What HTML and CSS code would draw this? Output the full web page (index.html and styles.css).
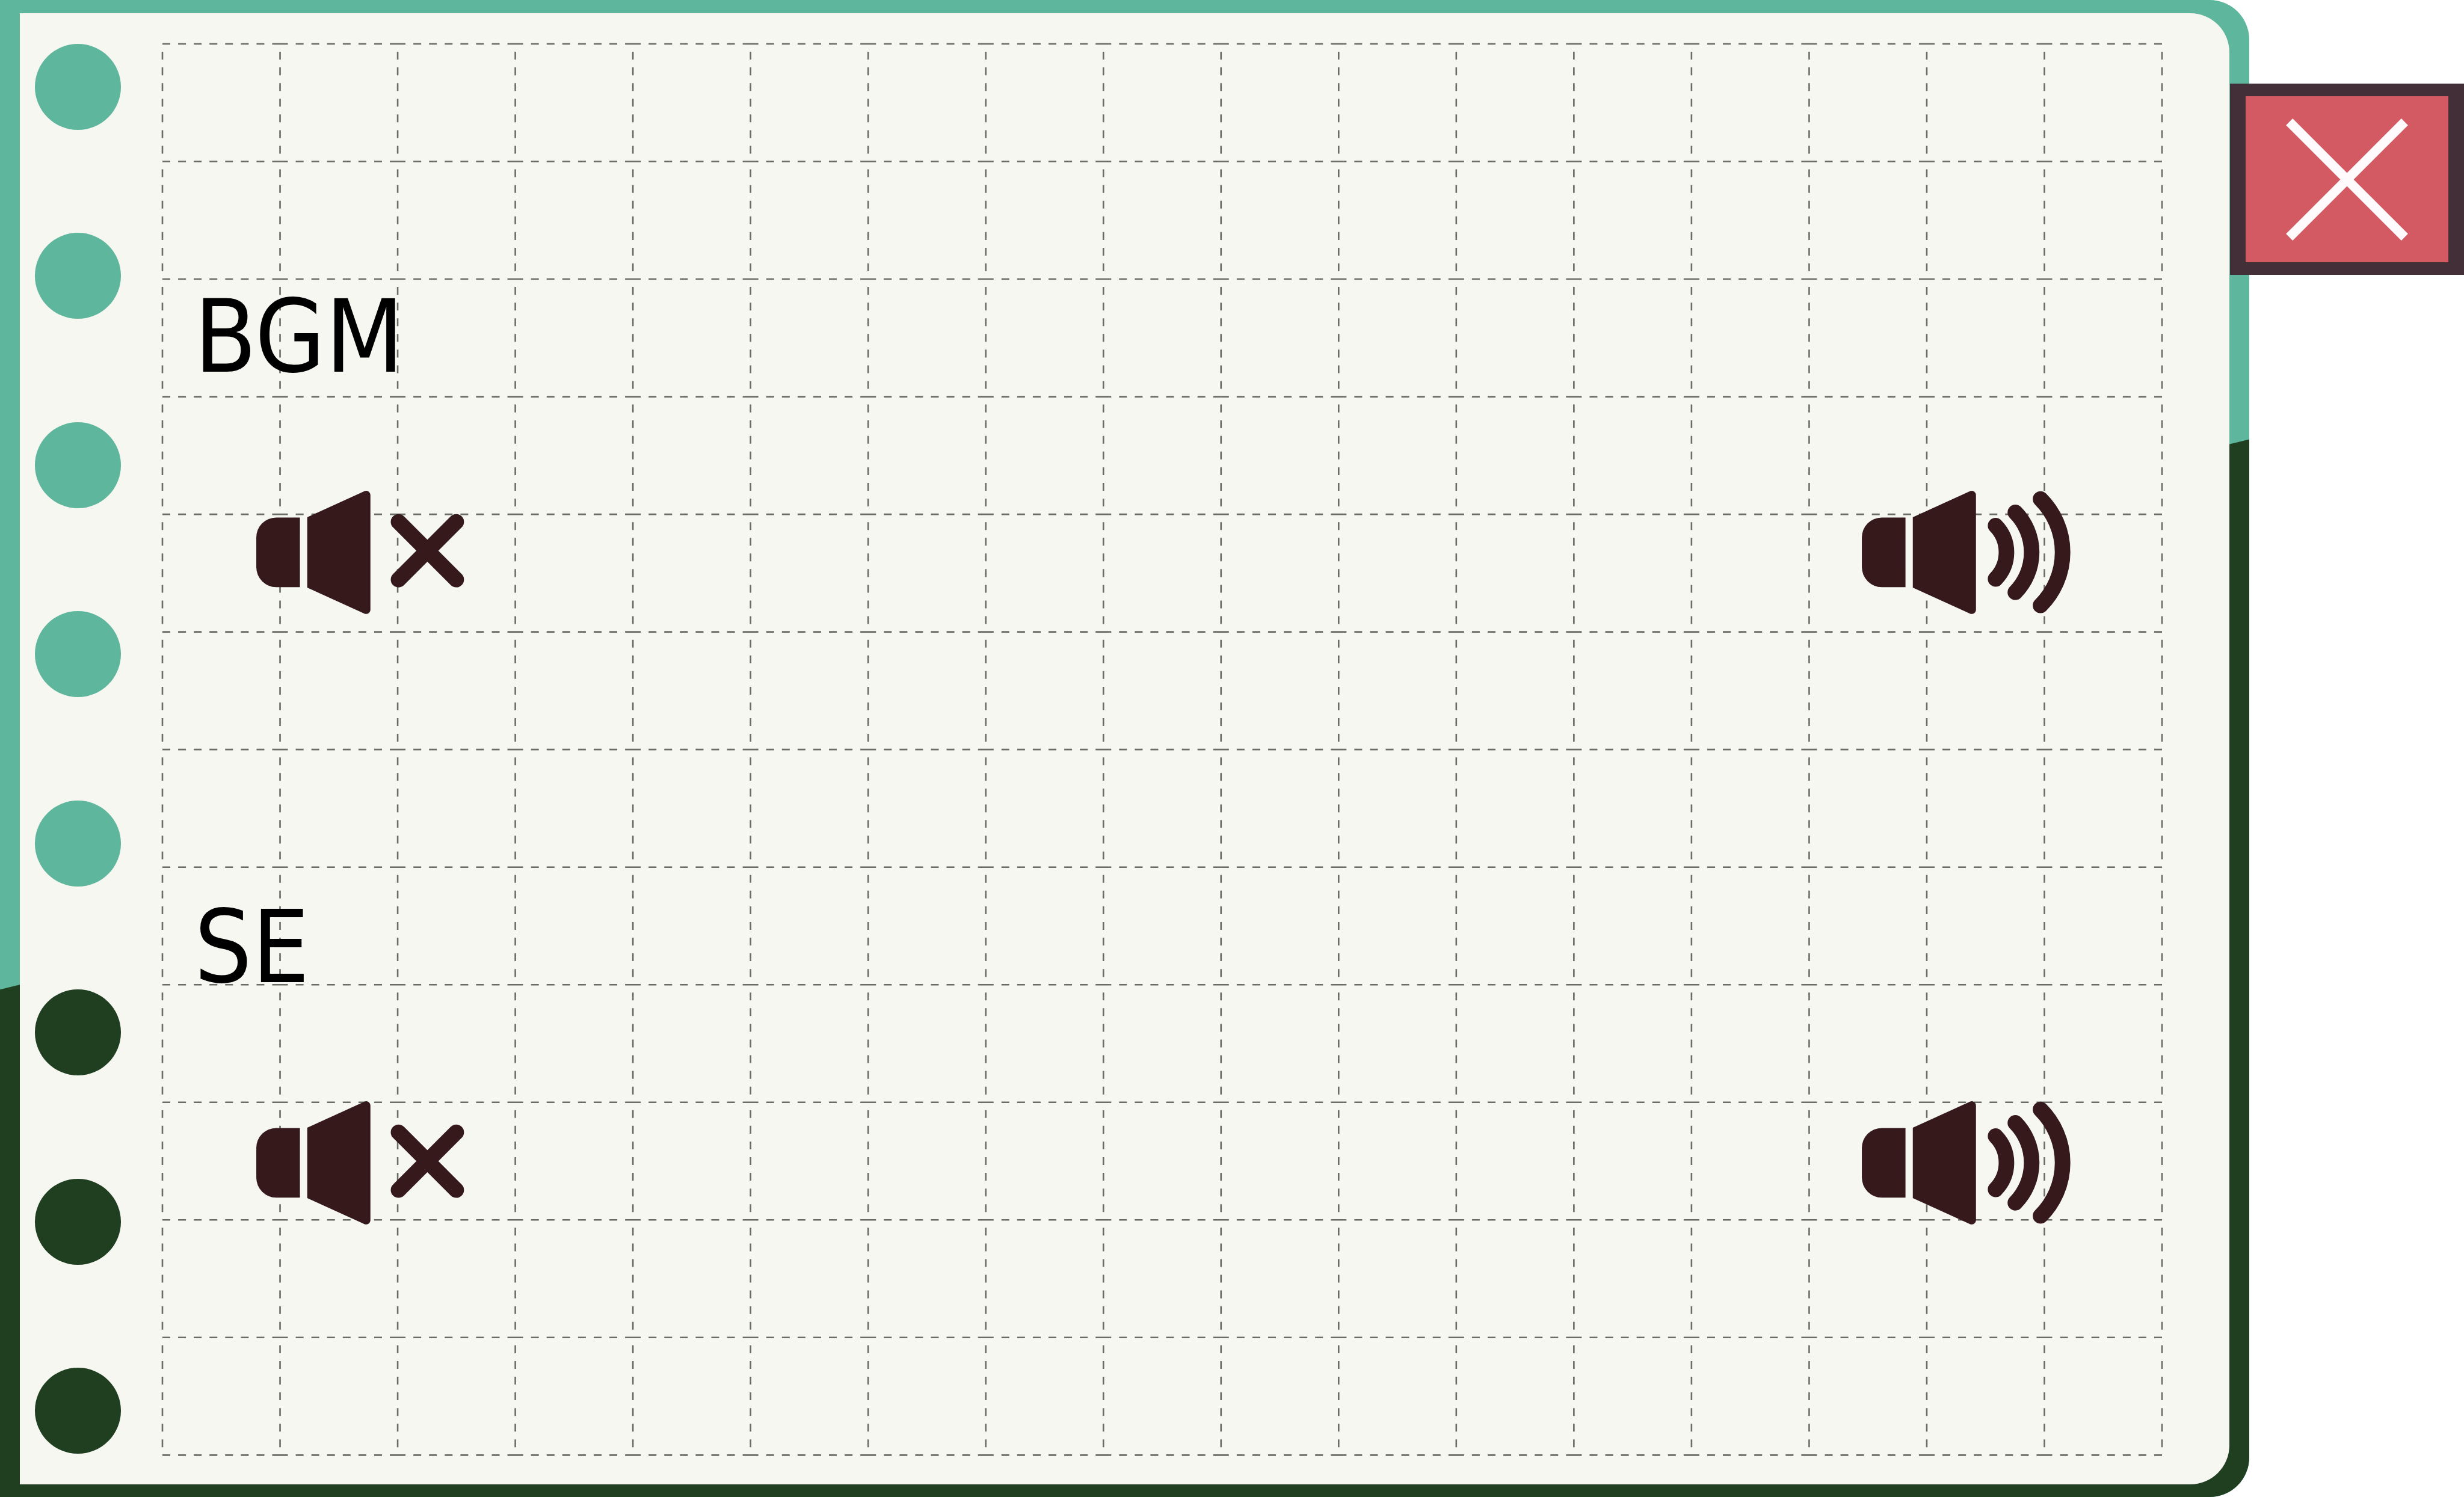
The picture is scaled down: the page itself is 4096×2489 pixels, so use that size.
FILE: index.html
```html
<!DOCTYPE html>
<html lang="en">
<head>
<meta charset="utf-8">
<meta name="viewport" content="width=device-width, initial-scale=1">
<title>Sound settings</title>
<link rel="stylesheet" href="styles.css">
</head>
<body>
<svg class="symbols" aria-hidden="true">
  <symbol id="speaker" viewBox="0 0 555 328">
    <path d="M116 71H53A53 53 0 0 0 0 124V203.300A53 53 0 0 0 53 256.300H116Z"/>
    <path d="M135.500 70.300L287.300 1.100A11.500 11.500 0 0 1 303.500 11.500V316.300A11.500 11.500 0 0 1 287.300 326.700L135.500 257.500Z"/>
  </symbol>
</svg>
<main class="page">
  <section class="cover">
    <div class="sheet">
      <div class="holes" aria-hidden="true">
        <span class="hole"></span>
        <span class="hole"></span>
        <span class="hole"></span>
        <span class="hole"></span>
        <span class="hole"></span>
        <span class="hole hole-dark"></span>
        <span class="hole hole-dark"></span>
        <span class="hole hole-dark"></span>
      </div>
      <div class="board">
        <svg class="grid-lines" viewBox="0 0 255 180" aria-hidden="true">
          <path class="line-across" d="M0 0H255M0 15H255M0 30H255M0 45H255M0 60H255M0 75H255M0 90H255M0 105H255M0 120H255M0 135H255M0 150H255M0 165H255M0 180H255"/>
          <path class="line-down" d="M0 0V180M15 0V180M30 0V180M45 0V180M60 0V180M75 0V180M90 0V180M105 0V180M120 0V180M135 0V180M150 0V180M165 0V180M180 0V180M195 0V180M210 0V180M225 0V180M240 0V180M255 0V180"/>
        </svg>
        <div class="settings">
          <section class="setting">
            <h2 class="setting-name">BGM</h2>
            <div class="setting-controls">
              <button class="sound-button" type="button" aria-label="Mute BGM">
                <svg class="sound-icon" viewBox="0 0 555 328" aria-hidden="true">
                  <use href="#speaker"/>
                  <path class="stroke" d="M378.300 82.700L531.700 236.300M531.700 82.700L378.300 236.300"/>
                </svg>
              </button>
              <button class="sound-button" type="button" aria-label="Turn BGM up">
                <svg class="sound-icon" viewBox="0 0 555 328" aria-hidden="true">
                  <use href="#speaker"/>
                  <path class="stroke" d="M355.600 92.700A101.400 101.400 0 0 1 355.600 234.600M408.200 57.400A151.900 151.900 0 0 1 408.200 270M475.200 22A200 200 0 0 1 475.200 305"/>
                </svg>
              </button>
            </div>
          </section>
          <section class="setting">
            <h2 class="setting-name">SE</h2>
            <div class="setting-controls">
              <button class="sound-button" type="button" aria-label="Mute SE">
                <svg class="sound-icon" viewBox="0 0 555 328" aria-hidden="true">
                  <use href="#speaker"/>
                  <path class="stroke" d="M378.300 82.700L531.700 236.300M531.700 82.700L378.300 236.300"/>
                </svg>
              </button>
              <button class="sound-button" type="button" aria-label="Turn SE up">
                <svg class="sound-icon" viewBox="0 0 555 328" aria-hidden="true">
                  <use href="#speaker"/>
                  <path class="stroke" d="M355.600 92.700A101.400 101.400 0 0 1 355.600 234.600M408.200 57.400A151.900 151.900 0 0 1 408.200 270M475.200 22A200 200 0 0 1 475.200 305"/>
                </svg>
              </button>
            </div>
          </section>
        </div>
      </div>
    </div>
  </section>
  <button class="close-button" type="button" aria-label="Close">
    <svg class="close-icon" viewBox="0 0 325 325" aria-hidden="true">
      <path d="M9 9L316 316M316 9L9 316"/>
    </svg>
  </button>
</main>
</body>
</html>
```
FILE: styles.css
```css
:root {
  --mint: #5eb69d;
  --forest: #203f21;
  --paper: #f6f7f1;
  --grid: #6b6c66;
  --ink: #35191b;
  --plum: #432f38;
  --red: #d35a62;
}

* {
  box-sizing: border-box;
}

body {
  margin: 0;
  background: #fff;
  color: #000;
  font-family: "DejaVu Sans Condensed", "DejaVu Sans", sans-serif;
}

.symbols {
  position: absolute;
  width: 0;
  height: 0;
}

.page {
  display: flex;
  align-items: flex-start;
  min-height: 100vh;
}

/* Notebook cover: mint, with a forest green part below a slanted edge */
.cover {
  position: relative;
  display: flex;
  flex: 1;
  min-width: 0;
  min-height: 100vh;
  padding: 22px 33px 21px;
  overflow: hidden;
  border-radius: 0 66px 66px 0;
  background: var(--mint);
}

.cover::before {
  content: "";
  position: absolute;
  inset: 0;
  background: var(--forest);
  clip-path: polygon(0 66.1%, 100% 29.35%, 100% 100%, 0 100%);
}

.sheet {
  position: relative;
  display: flex;
  flex: 1;
  align-items: flex-start;
  gap: 69px;
  min-width: 0;
  padding: 51px 112px 48px 25px;
  border-radius: 0 65px 65px 0;
  background: var(--paper);
}

.holes {
  display: flex;
  flex-direction: column;
  align-self: stretch;
  justify-content: space-between;
  padding-bottom: 3px;
}

.hole {
  width: 143px;
  height: 143px;
  border-radius: 50%;
  background: var(--mint);
}

.hole-dark {
  background: var(--forest);
}

.board {
  display: grid;
  flex: 1;
  min-width: 0;
}

.grid-lines,
.settings {
  grid-area: 1 / 1;
}

.grid-lines {
  display: block;
  width: 100%;
  overflow: visible;
  fill: none;
  stroke: var(--grid);
  stroke-width: 0.2;
}

/* Each cell has a dash at both ends of its horizontal edges */
.line-across {
  stroke-dasharray: 1 1 1 1 1 1 1 1 1 1 1 1 1 1 1 0;
}

/* and a gap at both ends of its vertical edges */
.line-down {
  stroke-dasharray: 0 1 1 1 1 1 1 1 1 1 1 1 1 1 1 1;
}

.settings {
  position: relative;
  display: flex;
  flex-direction: column;
  gap: 469px;
  padding: 402px 152px 0 53px;
}

.setting {
  display: flex;
  flex-direction: column;
  gap: 171px;
}

.setting-name {
  margin: 0;
  font-size: 168px;
  font-weight: 400;
  line-height: 170px;
}

.setting-controls {
  display: flex;
  justify-content: space-between;
  padding-left: 103px;
}

.sound-button {
  padding: 0;
  border: 0;
  background: none;
  cursor: pointer;
}

.sound-icon {
  display: block;
  width: 347px;
  height: 205px;
  fill: var(--ink);
}

.sound-icon .stroke {
  fill: none;
  stroke: var(--ink);
  stroke-width: 41.4;
  stroke-linecap: round;
}

.close-button {
  position: relative;
  display: flex;
  align-items: center;
  justify-content: center;
  width: 389px;
  height: 318px;
  margin: 139px 0 0 -32px;
  padding: 0;
  border: solid var(--plum);
  border-width: 21px 26px;
  background: var(--red);
  cursor: pointer;
}

.close-icon {
  width: 203px;
  height: 203px;
  fill: none;
  stroke: #fffbfd;
  stroke-width: 25;
}
```
